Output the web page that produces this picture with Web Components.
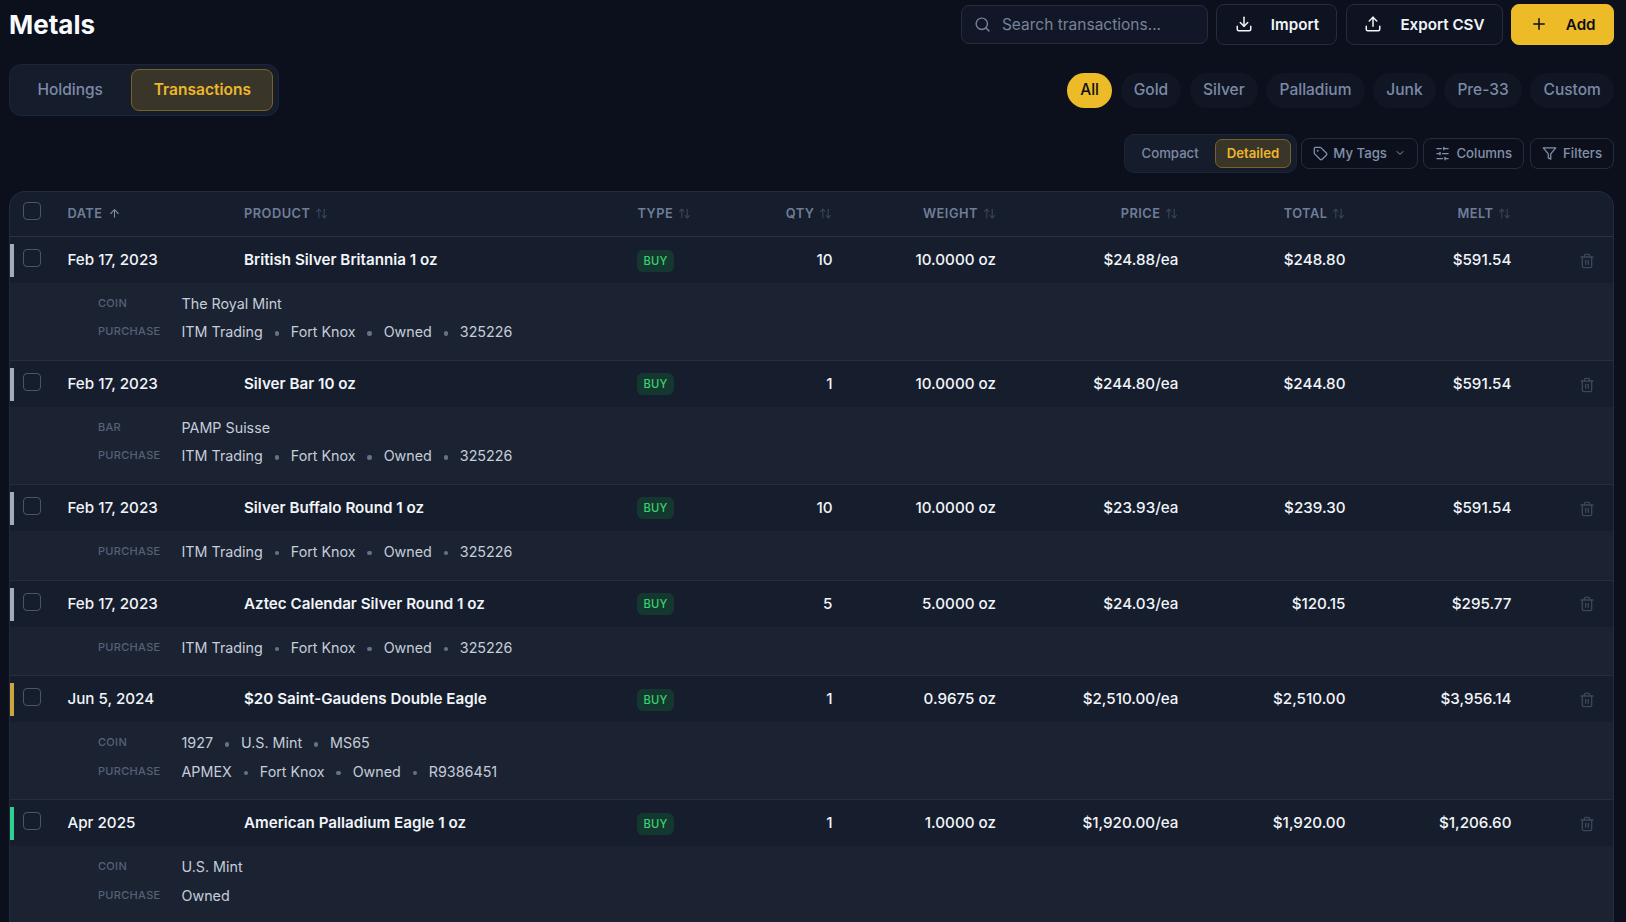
<!DOCTYPE html>
<html>
<head>
<meta charset="utf-8">
<title>Metals</title>
<style>
  html, body { margin: 0; height: 922px; overflow: hidden; background: #0c101d; }
  body { font-family: Inter, "Noto Sans", sans-serif; color: #f1f5f9; }
</style>
</head>
<body>

<metals-page>
  <ui-button slot="actions" icon="download">Import</ui-button>
  <ui-button slot="actions" icon="upload">Export CSV</ui-button>
  <ui-button slot="actions" icon="plus" primary>Add</ui-button>

  <seg-group slot="tabs" big>
    <seg-item>Holdings</seg-item>
    <seg-item active>Transactions</seg-item>
  </seg-group>

  <filter-pill slot="pills" active>All</filter-pill>
  <filter-pill slot="pills">Gold</filter-pill>
  <filter-pill slot="pills">Silver</filter-pill>
  <filter-pill slot="pills">Palladium</filter-pill>
  <filter-pill slot="pills">Junk</filter-pill>
  <filter-pill slot="pills">Pre-33</filter-pill>
  <filter-pill slot="pills">Custom</filter-pill>

  <seg-group slot="tools" style="margin-right:-2px">
    <seg-item>Compact</seg-item>
    <seg-item active>Detailed</seg-item>
  </seg-group>
  <ui-button slot="tools" small icon="tag" caret style="margin-right:-1px">My Tags</ui-button>
  <ui-button slot="tools" small icon="sliders">Columns</ui-button>
  <ui-button slot="tools" small icon="filter">Filters</ui-button>

  <tx-table>
    <tx-row metal="silver" date="Feb 17, 2023" product="British Silver Britannia 1 oz" qty="10" weight="10.0000 oz" price="$24.88/ea" total="$248.80" melt="$591.54">
      <tx-detail label="Coin"><span>The Royal Mint</span></tx-detail>
      <tx-detail label="Purchase"><span>ITM Trading</span><span>Fort Knox</span><span>Owned</span><span>325226</span></tx-detail>
    </tx-row>
    <tx-row metal="silver" date="Feb 17, 2023" product="Silver Bar 10 oz" qty="1" weight="10.0000 oz" price="$244.80/ea" total="$244.80" melt="$591.54">
      <tx-detail label="Bar"><span>PAMP Suisse</span></tx-detail>
      <tx-detail label="Purchase"><span>ITM Trading</span><span>Fort Knox</span><span>Owned</span><span>325226</span></tx-detail>
    </tx-row>
    <tx-row metal="silver" date="Feb 17, 2023" product="Silver Buffalo Round 1 oz" qty="10" weight="10.0000 oz" price="$23.93/ea" total="$239.30" melt="$591.54">
      <tx-detail label="Purchase"><span>ITM Trading</span><span>Fort Knox</span><span>Owned</span><span>325226</span></tx-detail>
    </tx-row>
    <tx-row metal="silver" date="Feb 17, 2023" product="Aztec Calendar Silver Round 1 oz" qty="5" weight="5.0000 oz" price="$24.03/ea" total="$120.15" melt="$295.77">
      <tx-detail label="Purchase"><span>ITM Trading</span><span>Fort Knox</span><span>Owned</span><span>325226</span></tx-detail>
    </tx-row>
    <tx-row metal="gold" date="Jun 5, 2024" product="$20 Saint-Gaudens Double Eagle" qty="1" weight="0.9675 oz" price="$2,510.00/ea" total="$2,510.00" melt="$3,956.14">
      <tx-detail label="Coin"><span>1927</span><span>U.S. Mint</span><span>MS65</span></tx-detail>
      <tx-detail label="Purchase"><span>APMEX</span><span>Fort Knox</span><span>Owned</span><span>R9386451</span></tx-detail>
    </tx-row>
    <tx-row metal="palladium" date="Apr 2025" product="American Palladium Eagle 1 oz" qty="1" weight="1.0000 oz" price="$1,920.00/ea" total="$1,920.00" melt="$1,206.60">
      <tx-detail label="Coin"><span>U.S. Mint</span></tx-detail>
      <tx-detail label="Purchase"><span>Owned</span></tx-detail>
    </tx-row>
  </tx-table>
</metals-page>

<script>
// lucide-style icon bodies, 24x24 viewbox
const ICONS = {
  search: '<circle cx="11" cy="11" r="8"/><path d="m21 21-4.3-4.3"/>',
  download: '<path d="M21 15v4a2 2 0 0 1-2 2H5a2 2 0 0 1-2-2v-4"/><polyline points="7 10 12 15 17 10"/><line x1="12" x2="12" y1="15" y2="3"/>',
  upload: '<path d="M21 15v4a2 2 0 0 1-2 2H5a2 2 0 0 1-2-2v-4"/><polyline points="17 8 12 3 7 8"/><line x1="12" x2="12" y1="3" y2="15"/>',
  plus: '<path d="M5 12h14"/><path d="M12 5v14"/>',
  tag: '<path d="M12.586 2.586A2 2 0 0 0 11.172 2H4a2 2 0 0 0-2 2v7.172a2 2 0 0 0 .586 1.414l8.704 8.704a2.426 2.426 0 0 0 3.42 0l6.58-6.58a2.426 2.426 0 0 0 0-3.42z"/><circle cx="7.5" cy="7.5" r=".5" fill="currentColor"/>',
  sliders: '<line x1="21" x2="14" y1="4" y2="4"/><line x1="10" x2="3" y1="4" y2="4"/><line x1="21" x2="12" y1="12" y2="12"/><line x1="8" x2="3" y1="12" y2="12"/><line x1="21" x2="16" y1="20" y2="20"/><line x1="12" x2="3" y1="20" y2="20"/><line x1="14" x2="14" y1="2" y2="6"/><line x1="8" x2="8" y1="10" y2="14"/><line x1="16" x2="16" y1="18" y2="22"/>',
  filter: '<polygon points="22 3 2 3 10 12.46 10 19 14 21 14 12.46 22 3"/>',
  chevron: '<path d="m6 9 6 6 6-6"/>',
  trash: '<path d="M3 6h18"/><path d="M19 6v14c0 1-1 2-2 2H7c-1 0-2-1-2-2V6"/><path d="M8 6V4c0-1 1-2 2-2h4c1 0 2 1 2 2v2"/><line x1="10" x2="10" y1="11" y2="17"/><line x1="14" x2="14" y1="11" y2="17"/>',
  up: '<path d="m5 12 7-7 7 7"/><path d="M12 19V5"/>',
  updown: '<path d="m21 16-4 4-4-4"/><path d="M17 20V4"/><path d="m3 8 4-4 4 4"/><path d="M7 4v16"/>'
};

class Base extends HTMLElement {
  constructor() {
    super();
    this.attachShadow({mode: 'open'});
  }
}

customElements.define('ui-icon', class extends Base {
  connectedCallback() {
    const size = this.getAttribute('size') || 16;
    this.shadowRoot.innerHTML = `
      <style>:host { display: inline-flex; flex: none; } svg { display: block; }</style>
      <svg width="${size}" height="${size}" viewBox="0 0 24 24" fill="none" stroke="currentColor"
        stroke-width="${this.getAttribute('stroke') || 2}" stroke-linecap="round" stroke-linejoin="round">${ICONS[this.getAttribute('name')]}</svg>`;
  }
});

customElements.define('ui-button', class extends Base {
  connectedCallback() {
    const small = this.hasAttribute('small');
    const caret = this.hasAttribute('caret') ? '<ui-icon class="caret" name="chevron" size="12"></ui-icon>' : '';
    this.shadowRoot.innerHTML = `
      <style>
        :host {
          display: inline-flex; align-items: center; box-sizing: border-box;
          height: 41px; padding: 0 17.4px 1px; gap: 18px;
          border: 1px solid #252c3e; border-radius: 8px;
          background: #0e1321; color: #f1f5f9;
          font-size: 15.2px; font-weight: 600; white-space: nowrap;
        }
        :host([primary]) { background: #edbb27; border-color: #edbb27; color: #0b0f1a; }
        :host([small]) {
          height: 31px; padding: 0 11px 1px; gap: 6px; color: #8391aa;
          font-size: 13.2px; font-weight: 500; background: #0c101d;
        }
        :host([caret]) { padding-left: 10.5px; gap: 5.5px; }
        .caret { margin-left: 2px; }
      </style>
      <ui-icon name="${this.getAttribute('icon')}" size="${small ? 15 : 18}"></ui-icon>
      <slot></slot>${caret}`;
  }
});

customElements.define('seg-item', class extends Base {
  constructor() {
    super();
    this.shadowRoot.innerHTML = `
      <style>
        :host {
          display: flex; align-items: center; box-sizing: border-box;
          padding: 0 var(--seg-pad, 11px) 1px;
          border: 1px solid transparent; border-radius: var(--seg-radius, 7px);
          color: #7d8aa5; font-weight: 500; white-space: nowrap;
        }
        :host([active]) { background: #3a3529; border-color: #7a6322; color: #edb72b; font-weight: 600; }
      </style>
      <slot></slot>`;
  }
});

customElements.define('seg-group', class extends Base {
  constructor() {
    super();
    this.shadowRoot.innerHTML = `
      <style>
        :host {
          display: inline-flex; box-sizing: border-box; height: 39px; padding: 4px 5px; gap: 4px;
          background: #151c2c; border: 1px solid #1c2436; border-radius: 10px;
          font-size: 13.2px;
        }
        :host([big]) {
          height: 52px; padding: 4px 5px; gap: 6px; border-radius: 12px;
          font-size: 15.5px; --seg-pad: 21.4px; --seg-radius: 8px;
        }
      </style>
      <slot></slot>`;
  }
});

customElements.define('filter-pill', class extends Base {
  constructor() {
    super();
    this.shadowRoot.innerHTML = `
      <style>
        :host {
          display: inline-flex; align-items: center; box-sizing: border-box; height: 35px; padding: 0 13.2px 1px;
          border-radius: 18px; background: #101624; color: #7d8aa5;
          font-size: 15.5px; font-weight: 500;
        }
        :host([active]) { background: #edbb27; color: #0b0f1a; padding: 0 13px 1px; }
      </style>
      <slot></slot>`;
  }
});

customElements.define('tx-table', class extends Base {
  constructor() {
    super();
    const sortable = (label, cls = '', icon = 'updown') => `
      <div class="th ${cls}">${label}<ui-icon class="${icon}" name="${icon}" size="13"></ui-icon></div>`;
    this.shadowRoot.innerHTML = `
      <style>
        :host {
          display: block; border: 1px solid #232b3f; border-bottom: 0; border-radius: 16px 16px 0 0;
          background: #161d2d; overflow: hidden;
          --tx-cols: 45.4px 176.6px 393.5px 104.5px 114px 163.5px 182.5px 167px 166px 1fr;
        }
        .head {
          display: grid; grid-template-columns: var(--tx-cols); height: 45px; padding-bottom: 2px; box-sizing: border-box;
          align-items: center; border-bottom: 1px solid #2a3244;
        }
        .th {
          display: flex; align-items: center; gap: 5px; padding: 0 12px;
          color: #6f7d98; font-size: 12.8px; font-weight: 600; letter-spacing: .5px;
        }
        .num { justify-content: flex-end; padding-right: 11.5px; }
        .updown { color: #3b4559; }
        .up { color: #7f8ca6; }
        .box {
          width: 18px; height: 18px; box-sizing: border-box; margin: -4px 0 0 13px;
          border: 1.5px solid #4b5568; border-radius: 4px;
        }
      </style>
      <div class="head">
        <div><div class="box"></div></div>
        ${sortable('DATE', '', 'up')}
        ${sortable('PRODUCT')}
        ${sortable('TYPE')}
        ${sortable('QTY', 'num')}
        ${sortable('WEIGHT', 'num')}
        ${sortable('PRICE', 'num')}
        ${sortable('TOTAL', 'num')}
        ${sortable('MELT', 'num')}
        <div></div>
      </div>
      <slot></slot>`;
  }
});

const METAL_COLORS = { silver: '#a3abb8', gold: '#c9a640', palladium: '#2fd08f' };

customElements.define('tx-row', class extends Base {
  connectedCallback() {
    const a = n => this.getAttribute(n);
    this.shadowRoot.innerHTML = `
      <style>
        :host { display: block; position: relative; border-bottom: 1px solid #252d3e; }
        .main {
          display: grid; grid-template-columns: var(--tx-cols); height: 46px; padding-bottom: 1px; box-sizing: border-box;
          align-items: center; font-size: 15.2px; font-weight: 500; color: #f1f5f9;
        }
        .main > div { padding: 0 12px; white-space: nowrap; }
        .main > .cb { padding: 0; }
        .main > .num { text-align: right; padding-right: 11.5px; }
        .bar { position: absolute; left: 0; top: 7px; width: 4px; height: 33px; background: ${METAL_COLORS[a('metal')]}; }
        .box {
          width: 18px; height: 18px; box-sizing: border-box; margin: -3px 0 0 13px;
          border: 1.5px solid #4b5568; border-radius: 4px;
        }
        .product { font-weight: 600; }
        .badge {
          display: inline-block; padding: 0 6px; height: 22px; line-height: 22px; border-radius: 6px;
          background: #14382f; color: #3ecf72; font-size: 11.2px; font-weight: 500; letter-spacing: .2px;
          vertical-align: middle; position: relative; top: 1px;
        }
        .main > .trash { color: #3c465a; display: flex; justify-content: flex-end; padding: 2.5px 18px 0 0; }
        .detail { background: #1b2332; padding: 8.5px 0 15.9px; display: flex; flex-direction: column; gap: 4px; }
      </style>
      <div class="bar"></div>
      <div class="main">
        <div class="cb"><div class="box"></div></div>
        <div>${a('date')}</div>
        <div class="product">${a('product')}</div>
        <div><span class="badge">BUY</span></div>
        <div class="num">${a('qty')}</div>
        <div class="num">${a('weight')}</div>
        <div class="num">${a('price')}</div>
        <div class="num">${a('total')}</div>
        <div class="num">${a('melt')}</div>
        <div class="trash"><ui-icon name="trash" size="16"></ui-icon></div>
      </div>
      <div class="detail"><slot></slot></div>`;
  }
});

customElements.define('tx-detail', class extends Base {
  connectedCallback() {
    this.shadowRoot.innerHTML = `
      <style>
        :host {
          display: grid; grid-template-columns: 83.5px 1fr; padding-left: 88px;
          height: 24.3px; align-items: center;
        }
        .label {
          color: #566178; font-size: 11px; font-weight: 500; letter-spacing: .3px;
          text-transform: uppercase; margin-top: -1.5px;
        }
        .vals { display: flex; align-items: center; color: #c5cdd9; font-size: 14.3px; white-space: nowrap; }
        ::slotted(span:not(:first-child))::before {
          content: ""; display: inline-block; width: 4.5px; height: 4.5px; margin: 0 11.75px;
          border-radius: 50%; background: #667288; vertical-align: middle;
        }
      </style>
      <div class="label">${this.getAttribute('label')}</div>
      <div class="vals"><slot></slot></div>`;
  }
});

customElements.define('search-box', class extends Base {
  constructor() {
    super();
    this.shadowRoot.innerHTML = `
      <style>
        :host {
          display: flex; align-items: center; gap: 11px; box-sizing: border-box;
          width: 247px; height: 39px; margin-top: 1px; padding: 0 12px;
          border: 1px solid #252c3e; border-radius: 8px; background: #111726;
          color: #76839a; font-size: 15.5px;
        }
      </style>
      <ui-icon name="search" size="17"></ui-icon>
      <slot>Search transactions...</slot>`;
  }
});

customElements.define('metals-page', class extends Base {
  constructor() {
    super();
    this.shadowRoot.innerHTML = `
      <style>
        :host { display: block; box-sizing: border-box; height: 922px; padding: 4px 12px 0 9px; overflow: hidden; }
        .bar { display: flex; align-items: center; justify-content: space-between; }
        .top { height: 41px; }
        h1 { margin: 0; font-size: 26px; line-height: 1.2; font-weight: 700; color: #f8fafc; }
        .actions { display: flex; gap: 8.5px; align-items: flex-start; }
        .second { height: 52px; margin-top: 19px; }
        .pills { display: flex; gap: 8.5px; }
        .tools { display: flex; gap: 6px; justify-content: flex-end; align-items: center; height: 39px; margin-top: 18px; }
        .table { margin-top: 18px; }
      </style>
      <div class="bar top">
        <h1>Metals</h1>
        <div class="actions"><search-box></search-box><slot name="actions"></slot></div>
      </div>
      <div class="bar second">
        <slot name="tabs"></slot>
        <div class="pills"><slot name="pills"></slot></div>
      </div>
      <div class="tools"><slot name="tools"></slot></div>
      <div class="table"><slot></slot></div>`;
  }
});
</script>
</body>
</html>
